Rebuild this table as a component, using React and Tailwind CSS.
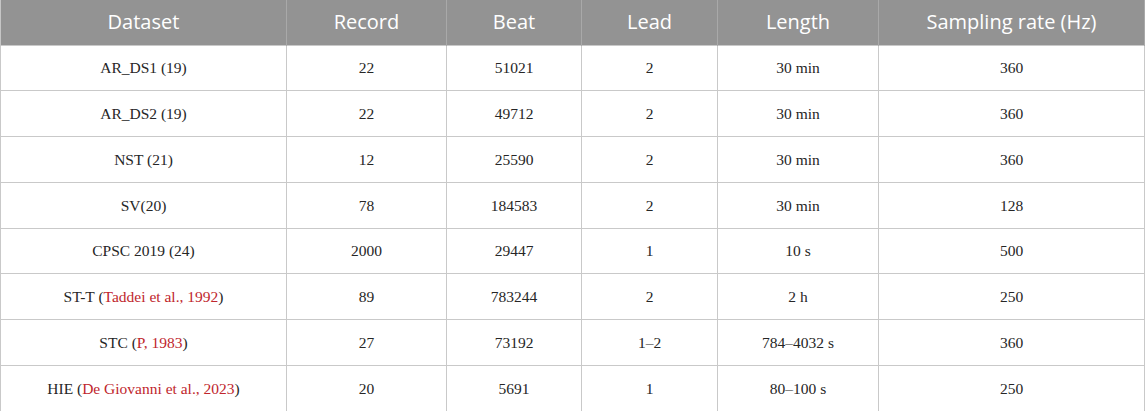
const rows = [
  [["AR_DS1 (19)"], "22", "51021", "2", "30 min", "360"],
  [["AR_DS2 (19)"], "22", "49712", "2", "30 min", "360"],
  [["NST (21)"], "12", "25590", "2", "30 min", "360"],
  [["SV(20)"], "78", "184583", "2", "30 min", "128"],
  [["CPSC 2019 (24)"], "2000", "29447", "1", "10 s", "500"],
  [["ST-T (", "Taddei et al., 1992", ")"], "89", "783244", "2", "2 h", "250"],
  [["STC (", "P, 1983", ")"], "27", "73192", "1\u20132", "784\u20134032 s", "360"],
  [["HIE (", "De Giovanni et al., 2023", ")"], "20", "5691", "1", "80\u2013100 s", "250"],
];

const headers = ["Dataset", "Record", "Beat", "Lead", "Length", "Sampling rate (Hz)"];
const widths = ["w-[286px]", "w-[160px]", "w-[135px]", "w-[136px]", "w-[161px]", "w-[266px]"];

export default function App() {
  return (
    <div className="w-[1145px] h-[411px] bg-white overflow-hidden">
      <table className="w-[1145px] border-collapse table-fixed">
        <thead>
          <tr className="h-[45px] bg-[#939393]">
            {headers.map((h, i) => (
              <th
                key={h}
                className={`${widths[i]} p-0 text-center font-normal text-white text-[20px] border-x border-[#a9a9a9] first:border-l-[#c6c6c6] [font-family:'Open_Sans',sans-serif]`}
              >
                {h}
              </th>
            ))}
          </tr>
        </thead>
        <tbody>
          {rows.map((r, ri) => (
            <tr key={ri} className="h-[45.75px]">
              {r.map((c, ci) => (
                <td
                  key={ci}
                  className="p-0 text-center text-[15.5px] text-[#262626] border border-[#c9c9c9] [font-family:'Liberation_Serif',serif]"
                >
                  {ci === 0 ? (
                    <>
                      {c[0]}
                      {c[1] && <span className="text-[#c0262d]">{c[1]}</span>}
                      {c[2]}
                    </>
                  ) : (
                    c
                  )}
                </td>
              ))}
            </tr>
          ))}
        </tbody>
      </table>
    </div>
  );
}
